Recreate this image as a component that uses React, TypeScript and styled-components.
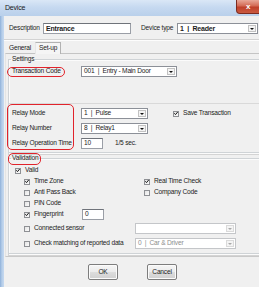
import React from 'react';
import styled, { createGlobalStyle } from 'styled-components';

const GlobalStyle = createGlobalStyle`
  html, body {
    margin: 0;
    padding: 0;
    background: #f0f0f0;
  }
  body {
    font-family: "Liberation Sans", Arial, sans-serif;
    font-size: 6.6px;
    letter-spacing: -0.2px;
    line-height: 1;
    color: #1c1c1c;
  }
`;

const Viewport = styled.div`
  width: 259px;
  height: 287px;
  overflow: hidden;
`;

const Window = styled.div`
  width: 266px;
  height: 287px;
  display: flex;
  flex-direction: column;
  background: linear-gradient(90deg, #8fb1da 0, #b6cee9 2px, #c6d9f0 4px);
`;

const TitleBar = styled.div`
  height: 16px;
  flex-shrink: 0;
  display: flex;
  align-items: center;
  padding-left: 5px;
  background: linear-gradient(180deg, #dae7f6 0%, #c6d9f0 45%, #b9d0eb 100%);
`;

const Title = styled.span`
  font-size: 7px;
  color: #1a1a1a;
  margin-top: -1px;
`;

const CloseButton = styled.div`
  margin-left: auto;
  align-self: flex-start;
  width: 30px;
  height: 14px;
  box-sizing: border-box;
  display: flex;
  align-items: center;
  padding-left: 9px;
  border: 1px solid #7c2b20;
  border-top: none;
  border-radius: 0 0 0 4px;
  background: linear-gradient(180deg, #e9a898 0%, #d36a55 45%, #c0402a 55%, #c95a40 100%);
  color: #fff;
  font-weight: bold;
  font-size: 8px;
`;

const Client = styled.div`
  flex: 1;
  margin-left: 4px;
  background: #f0f0f0;
  display: flex;
  flex-direction: column;
`;

const TopRow = styled.div`
  margin-top: 7px;
  height: 11px;
  display: flex;
  align-items: center;
  padding-left: 5px;
`;

const FieldLabel = styled.span<{ $width: number; $gap?: number }>`
  width: ${({ $width }) => $width}px;
  margin-left: ${({ $gap }) => $gap ?? 0}px;
  flex-shrink: 0;
  white-space: nowrap;
`;

const TextBox = styled.div<{ $width: number; $bold?: boolean }>`
  width: ${({ $width }) => $width}px;
  height: 11px;
  box-sizing: border-box;
  flex-shrink: 0;
  display: flex;
  align-items: center;
  padding-left: 2px;
  background: #fff;
  border: 1px solid #9a9ea6;
  border-top-color: #6f737a;
  font-weight: ${({ $bold }) => ($bold ? 'bold' : 'normal')};
  font-size: ${({ $bold }) => ($bold ? '7px' : '6.6px')};
`;

const Combo = styled.div<{ $width: number; $bold?: boolean; $disabled?: boolean }>`
  width: ${({ $width }) => $width}px;
  height: 11px;
  box-sizing: border-box;
  flex-shrink: 0;
  display: flex;
  align-items: center;
  background: #fff;
  border: 1px solid ${({ $disabled }) => ($disabled ? '#c4c6c9' : '#8c9098')};
  color: ${({ $disabled }) => ($disabled ? '#8d8d8d' : '#1c1c1c')};
  font-weight: ${({ $bold }) => ($bold ? 'bold' : 'normal')};
  font-size: ${({ $bold }) => ($bold ? '7px' : '6.6px')};
`;

const ComboValue = styled.span`
  flex: 1;
  padding-left: 2px;
  white-space: pre;
  overflow: hidden;
`;

const ComboArrow = styled.span<{ $disabled?: boolean }>`
  width: 8px;
  height: 7px;
  margin-right: 1px;
  box-sizing: border-box;
  display: flex;
  align-items: center;
  justify-content: center;
  border: 1px solid ${({ $disabled }) => ($disabled ? '#dadada' : '#c2c2c2')};
  background: #f4f4f4;

  &::after {
    content: '';
    border-left: 2px solid transparent;
    border-right: 2px solid transparent;
    border-top: 2px solid ${({ $disabled }) => ($disabled ? '#a8a8a8' : '#111')};
  }
`;

const Divider = styled.div`
  margin-top: 5px;
  border-top: 1px solid #d3d3d3;
  border-bottom: 1px solid #fdfdfd;
`;

const TabStrip = styled.div`
  height: 12px;
  display: flex;
  align-items: flex-end;
  padding-left: 1px;
`;

const Tab = styled.div<{ $active?: boolean }>`
  height: ${({ $active }) => ($active ? 12 : 10)}px;
  box-sizing: border-box;
  display: flex;
  align-items: center;
  padding: 0 ${({ $active }) => ($active ? 3 : 4)}px;
  margin-bottom: ${({ $active }) => ($active ? -1 : 0)}px;
  position: relative;
  background: ${({ $active }) => ($active ? '#f5f5f5' : 'transparent')};
  border: ${({ $active }) => ($active ? '1px solid #b2b2b2' : 'none')};
  border-left-color: #e6e6e6;
  border-bottom: none;
`;

const Panel = styled.div`
  margin-left: 1px;
  padding: 1px 0 2px 2px;
  border-top: 1px solid #c4c4c4;
  border-left: 1px solid #e4e4e4;
  border-bottom: 1px solid #c9c9c9;
`;

const Group = styled.fieldset<{ $gap?: number }>`
  margin: ${({ $gap }) => $gap ?? 0}px 0 0 0;
  padding: 0 0 0 3px;
  border: 1px solid #cfd3d6;
  box-shadow: inset 1px 1px 0 #fbfbfb, 0 2px 0 -1px #fbfbfb, 0 2px 0 0 #d4d4d4;
  min-width: 0;
`;

const Legend = styled.legend`
  padding: 0 1px;
  margin-left: -1px;
  line-height: 8px;
  height: 8px;
`;

const Marked = styled.span<{ $inset: string }>`
  position: relative;
  display: inline-block;

  &::after {
    content: '';
    position: absolute;
    inset: ${({ $inset }) => $inset};
    border: 1.5px solid #e1232b;
    border-radius: 5px;
    pointer-events: none;
  }
`;

const SettingsBody = styled.div`
  padding: 3px 0 2px 0;
`;

const FormRow = styled.div<{ $height?: number }>`
  height: ${({ $height }) => $height ?? 11}px;
  display: flex;
  align-items: center;
  white-space: nowrap;
`;

const Rule = styled.div`
  margin: 26px 0 0 -3px;
  height: 1px;
  background: #d9d9d9;
`;

const RelayBlock = styled.div`
  margin-top: 3px;
  display: flex;
  align-items: flex-start;
`;

const LabelColumn = styled(Marked)`
  width: 62px;
  display: flex;
  flex-direction: column;
  gap: 2px;
`;

const ControlColumn = styled.div`
  margin-left: 7px;
  width: 92px;
  display: flex;
  flex-direction: column;
  gap: 2px;
`;

const Unit = styled.span`
  margin-left: 12px;
`;

const ValidationBody = styled.div`
  padding: 3px 0 4px 0;
  display: flex;
  flex-direction: column;
`;

const OptionRow = styled.div<{ $indent: number; $top?: number }>`
  height: 11px;
  display: flex;
  align-items: center;
  margin-left: ${({ $indent }) => $indent}px;
  margin-top: ${({ $top }) => $top ?? 0}px;
`;

const Option = styled.label<{ $width?: number }>`
  display: flex;
  align-items: center;
  gap: 4px;
  flex-shrink: 0;
  width: ${({ $width }) => ($width ? `${$width}px` : 'auto')};
  white-space: nowrap;
`;

const Box = styled.span`
  width: 6px;
  height: 6px;
  box-sizing: border-box;
  flex-shrink: 0;
  display: flex;
  align-items: center;
  justify-content: center;
  border: 1px solid #8e9094;
  background: linear-gradient(135deg, #e4e4e4, #fbfbfb);
`;

const Footer = styled.div`
  margin-top: 7px;
  padding-left: 84px;
  display: flex;
  gap: 29px;
`;

const Button = styled.div`
  width: 30px;
  height: 16px;
  box-sizing: border-box;
  display: flex;
  align-items: center;
  justify-content: center;
  border: 1px solid #7d7d7d;
  border-radius: 2px;
  background: linear-gradient(180deg, #f6f6f6 0%, #ebebeb 50%, #dddddd 51%, #d0d0d0 100%);
  box-shadow: inset 0 0 0 1px #fbfbfb;
`;

function Select({ value, width, bold, disabled }: { value: string; width: number; bold?: boolean; disabled?: boolean }) {
  return (
    <Combo $width={width} $bold={bold} $disabled={disabled}>
      <ComboValue>{value}</ComboValue>
      <ComboArrow $disabled={disabled} />
    </Combo>
  );
}

function Check({ label, checked, width }: { label: string; checked?: boolean; width?: number }) {
  return (
    <Option $width={width}>
      <Box>
        {checked && (
          <svg width="5" height="5" viewBox="0 0 5 5">
            <path d="M0.4 2.2 L1.9 3.9 L4.6 0.6" fill="none" stroke="#111" strokeWidth="1.2" />
          </svg>
        )}
      </Box>
      {label}
    </Option>
  );
}

export default function App() {
  return (
    <>
      <GlobalStyle />
      <Viewport>
        <Window>
          <TitleBar>
            <Title>Device</Title>
            <CloseButton>x</CloseButton>
          </TitleBar>

          <Client>
            <TopRow>
              <FieldLabel $width={34}>Description</FieldLabel>
              <TextBox $width={88} $bold>
                Entrance
              </TextBox>
              <FieldLabel $width={36} $gap={10}>
                Device type
              </FieldLabel>
              <Select value="1  |  Reader" width={81} bold />
            </TopRow>

            <Divider />

            <TabStrip>
              <Tab>General</Tab>
              <Tab $active>Set-up</Tab>
            </TabStrip>

            <Panel>
              <Group>
                <Legend>Settings</Legend>
                <SettingsBody>
                  <FormRow>
                    <FieldLabel $width={69}>
                      <Marked $inset="-1px -4px -2px -5px">Transaction Code</Marked>
                    </FieldLabel>
                    <Select value="001  |  Entry - Main Door" width={96} />
                  </FormRow>

                  <Rule />

                  <RelayBlock>
                    <LabelColumn $inset="-3px 0 0 -5px">
                      <FormRow $height={13}>Relay Mode</FormRow>
                      <FormRow $height={13}>Relay Number</FormRow>
                      <FormRow $height={13}>Relay Operation Time</FormRow>
                    </LabelColumn>
                    <ControlColumn>
                      <FormRow $height={13}>
                        <Select value="1  |  Pulse" width={67} />
                      </FormRow>
                      <FormRow $height={13}>
                        <Select value="8  |  Relay1" width={67} />
                      </FormRow>
                      <FormRow $height={13}>
                        <TextBox $width={22}>10</TextBox>
                        <Unit>1/5 sec.</Unit>
                      </FormRow>
                    </ControlColumn>
                    <FormRow $height={13}>
                      <Check label="Save Transaction" checked />
                    </FormRow>
                  </RelayBlock>
                </SettingsBody>
              </Group>

              <Group $gap={1}>
                <Legend>
                  <Marked $inset="-1px -3px -3px -4px">Validation</Marked>
                </Legend>
                <ValidationBody>
                  <OptionRow $indent={3}>
                    <Check label="Valid" checked />
                  </OptionRow>
                  <OptionRow $indent={12}>
                    <Check label="Time Zone" checked width={120} />
                    <Check label="Real Time Check" checked />
                  </OptionRow>
                  <OptionRow $indent={12}>
                    <Check label="Anti Pass Back" width={120} />
                    <Check label="Company Code" />
                  </OptionRow>
                  <OptionRow $indent={12}>
                    <Check label="PIN Code" />
                  </OptionRow>
                  <OptionRow $indent={12}>
                    <Check label="Fingerprint" checked width={58} />
                    <TextBox $width={22}>0</TextBox>
                  </OptionRow>
                  <OptionRow $indent={12} $top={3}>
                    <Check label="Connected sensor" width={111} />
                    <Select value="" width={101} disabled />
                  </OptionRow>
                  <OptionRow $indent={12} $top={4}>
                    <Check label="Check matching of reported data" width={111} />
                    <Select value="0  |  Car & Driver" width={101} disabled />
                  </OptionRow>
                </ValidationBody>
              </Group>
            </Panel>

            <Footer>
              <Button>OK</Button>
              <Button>Cancel</Button>
            </Footer>
          </Client>
        </Window>
      </Viewport>
    </>
  );
}
